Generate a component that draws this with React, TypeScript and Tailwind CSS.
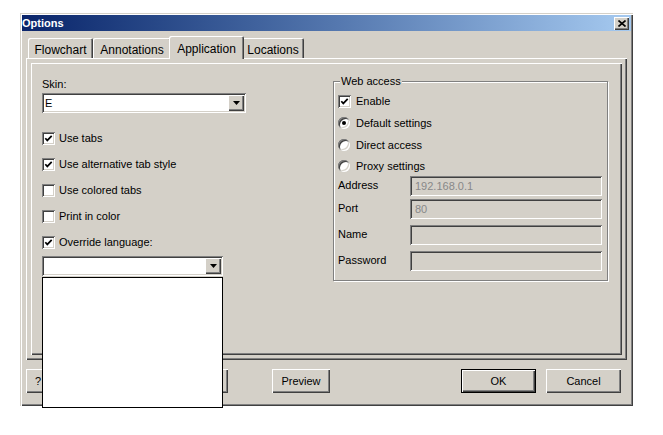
import React from "react";

const raised =
  "bg-[#d4d0c8] shadow-[inset_1px_1px_0_#fff,inset_-1px_-1px_0_#404040,inset_-2px_-2px_0_#808080]";
const sunken =
  "shadow-[inset_1px_1px_0_#808080,inset_-1px_-1px_0_#fff,inset_2px_2px_0_#404040,inset_-2px_-2px_0_#d4d0c8]";

function Check({ on }: { on?: boolean }) {
  return (
    <span className={`flex w-[13px] h-[13px] shrink-0 items-center justify-center bg-white ${sunken}`}>
      {on && (
        <svg width="13" height="13" viewBox="0 0 13 13">
          <polyline points="3.3,6.2 5.3,8.4 9.7,3.8" fill="none" stroke="#000" strokeWidth="1.7" />
        </svg>
      )}
    </span>
  );
}

function Radio({ on }: { on?: boolean }) {
  return (
    <span className="flex w-[12px] h-[12px] shrink-0 items-center justify-center rounded-full bg-white shadow-[inset_1px_1px_0_#808080,inset_-1px_-1px_0_#fff,inset_2px_2px_0_#404040,inset_-2px_-2px_0_#d4d0c8]">
      {on && <span className="w-[4px] h-[4px] rounded-full bg-black" />}
    </span>
  );
}

function Arrow() {
  return (
    <span className={`flex w-[16px] h-[16px] mr-[2px] items-center justify-center ${raised}`}>
      <svg width="7" height="4" viewBox="0 0 7 4">
        <polygon points="0,0 7,0 3.5,4" fill="#000" />
      </svg>
    </span>
  );
}

function CheckRow({ on, label }: { on?: boolean; label: string }) {
  return (
    <div className="flex items-center h-[26px] gap-[4px]">
      <Check on={on} />
      <span>{label}</span>
    </div>
  );
}

function Field({ label, value }: { label: string; value?: string }) {
  return (
    <div className="flex items-center h-[20px]">
      <span className="w-[72px] -mt-[1px]">{label}</span>
      <div className={`flex items-center w-[192px] h-[20px] pl-[5px] bg-[#d4d0c8] text-[#888] ${sunken}`}>
        {value}
      </div>
    </div>
  );
}

function Tab({ label, w, active }: { label: string; w: string; active?: boolean }) {
  if (active) {
    return (
      <div
        className={`relative z-10 -mx-[2px] mb-[-1px] h-[23px] ${w} flex justify-center pt-[4px] rounded-t-[2px] bg-[#d4d0c8] shadow-[inset_1px_1px_0_#fff,inset_-1px_0_0_#404040,inset_-2px_0_0_#808080]`}
      >
        {label}
      </div>
    );
  }
  return (
    <div
      className={`h-[20px] ${w} flex justify-center pt-[3px] rounded-t-[2px] shadow-[inset_1px_1px_0_#fff,inset_-1px_0_0_#404040,inset_-2px_0_0_#808080]`}
    >
      {label}
    </div>
  );
}

export default function App() {
  return (
    <div className="w-[663px] h-[435px] bg-white pt-[13px] pl-[20px] font-['Liberation_Sans',Arial,sans-serif] text-[11px] text-black">
      <div className="w-[613px] h-[393px] p-[2px] bg-[#d4d0c8] shadow-[inset_1px_1px_0_#d4d0c8,inset_2px_2px_0_#fff,inset_-1px_-1px_0_#404040,inset_-2px_-2px_0_#808080]">
        <div className="flex items-center justify-between h-[16px] pl-[0px] pr-[2px] bg-gradient-to-r from-[#0a246a] to-[#a6caf0]">
          <span className="font-bold text-white">Options</span>
          <span className={`flex w-[15px] h-[13px] items-center justify-center ${raised}`}>
            <svg width="8" height="7" viewBox="0 0 8 7">
              <path d="M0.5 0.5 L7.5 6.5 M7.5 0.5 L0.5 6.5" stroke="#000" strokeWidth="1.6" />
            </svg>
          </span>
        </div>

        <div className="px-[4px]">
          <div className="flex items-end h-[22px] mt-[5px] pl-[2px] text-[12px]">
            <Tab label="Flowchart" w="w-[65px]" />
            <Tab label="Annotations" w="w-[78px]" />
            <Tab label="Application" w="w-[75px]" active />
            <Tab label="Locations" w="w-[62px]" />
          </div>

          <div className="relative h-[302px] p-[5px] bg-[#d4d0c8] shadow-[inset_1px_1px_0_#fff,inset_-1px_-1px_0_#404040,inset_-2px_-2px_0_#808080]">
            <div className="flex h-full pl-[11px] pt-[15px] shadow-[inset_1px_1px_0_#fff,inset_-1px_-1px_0_#404040,inset_-2px_-2px_0_#808080]">
              <div className="flex flex-col w-[291px]">
                <div className="h-[13px] leading-[13px]">Skin:</div>
                <div className={`flex items-center w-[204px] h-[20px] mt-[2px] pl-[3px] bg-white ${sunken}`}>
                  <span className="flex-1">E</span>
                  <Arrow />
                </div>
                <div className="mt-[12px]">
                  <CheckRow on label="Use tabs" />
                  <CheckRow on label="Use alternative tab style" />
                  <CheckRow label="Use colored tabs" />
                  <CheckRow label="Print in color" />
                  <CheckRow on label="Override language:" />
                </div>
                <div className={`relative flex items-center w-[181px] h-[20px] mt-[1px] bg-white ${sunken}`}>
                  <span className="flex-1" />
                  <Arrow />
                  <div className="absolute left-0 top-[21px] z-20 w-[181px] h-[131px] bg-white border border-black" />
                </div>
              </div>

              <div className="relative w-[275px] h-[200px] mt-[3px] pl-[4px] pt-[8px] border border-[#808080] shadow-[1px_1px_0_#fff,inset_1px_1px_0_#fff]">
                <span className="absolute left-[6px] -top-[7px] px-[1px] bg-[#d4d0c8] leading-[13px]">Web access</span>
                <div className="flex items-center h-[22px] gap-[5px]">
                  <Check on />
                  <span>Enable</span>
                </div>
                <div className="flex items-center h-[22px] gap-[6px]">
                  <Radio on />
                  <span>Default settings</span>
                </div>
                <div className="flex items-center h-[22px] gap-[6px]">
                  <Radio />
                  <span>Direct access</span>
                </div>
                <div className="flex items-center h-[20px] gap-[6px]">
                  <Radio />
                  <span>Proxy settings</span>
                </div>
                <Field label="Address" value="192.168.0.1" />
                <div className="mt-[3px]">
                  <Field label="Port" value="80" />
                </div>
                <div className="mt-[6px]">
                  <Field label="Name" />
                </div>
                <div className="mt-[6px]">
                  <Field label="Password" />
                </div>
              </div>
            </div>
          </div>

          <div className="flex h-[24px] mt-[9px]">
            <button className={`w-[24px] h-[24px] ${raised}`}>?</button>
            <button className={`w-[78px] h-[24px] ml-[100px] ${raised}`} />
            <button className={`w-[58px] h-[24px] ml-[44px] ${raised}`}>Preview</button>
            <button className="w-[75px] h-[24px] ml-[131px] border border-black bg-[#d4d0c8] shadow-[inset_1px_1px_0_#fff,inset_-1px_-1px_0_#404040,inset_-2px_-2px_0_#808080]">
              OK
            </button>
            <button className={`w-[75px] h-[24px] ml-[10px] ${raised}`}>Cancel</button>
          </div>
        </div>
      </div>
    </div>
  );
}
